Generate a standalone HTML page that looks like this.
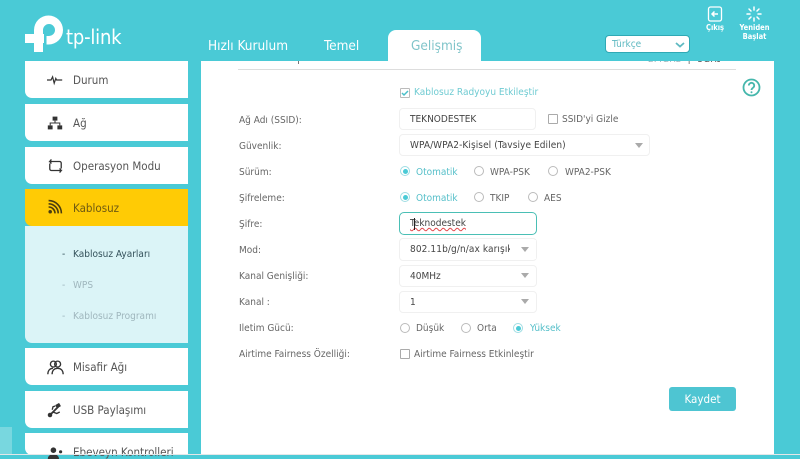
<!DOCTYPE html>
<html lang="tr">
<head>
<meta charset="utf-8">
<title>TP-Link</title>
<style>
html,body{margin:0;padding:0}
body{width:800px;height:455px;overflow:hidden;position:relative;background:#4acad6;font-family:"DejaVu Sans Condensed","DejaVu Sans","Liberation Sans",sans-serif;font-stretch:condensed;font-size:10px;color:#555}
.a{position:absolute;white-space:nowrap}
.nav{position:absolute;left:25px;width:163px;height:37px;background:#fff;border-radius:0 0 0 7px;box-sizing:border-box}
.nav span{position:absolute;left:48px;top:12px;font-size:11.500px;line-height:14px;color:#555;white-space:nowrap}
.nav svg{position:absolute;left:22px;top:11px}
.lb{position:absolute;left:239px;font-size:10px;color:#666;white-space:nowrap;line-height:12px}
.box{position:absolute;left:399px;width:138px;height:22px;border:1px solid #f0f0f0;border-radius:4px;background:#fff;box-sizing:border-box;font-size:10px;color:#444;line-height:22px;padding-left:10px;white-space:nowrap}
.tri{position:absolute;width:0;height:0;border-left:4px solid transparent;border-right:4px solid transparent;border-top:5px solid #aaa}
.r{position:absolute;width:10px;height:10px;border:1px solid #bbb;border-radius:50%;box-sizing:border-box;background:#fff}
.r.on{border-color:#9fdde3}
.r.on:after{content:"";position:absolute;left:1.500px;top:1.500px;width:5px;height:5px;border-radius:50%;background:#4acad6}
.t{position:absolute;font-size:10px;color:#666;white-space:nowrap;line-height:12px}
.t.c{color:#55bfc9}
.cb{position:absolute;width:8px;height:8px;border:1px solid #aaa;border-radius:1px;background:#fff}
</style>
</head>
<body>
<!-- logo -->
<svg class="a" style="left:25px;top:15px" width="38" height="38" viewBox="0 0 38 38" fill="#fff">
<path d="M9 15A14.500 14.500 0 1 1 23.500 29.500H21.500V21H23.500A6 6 0 1 0 18 15V37H9Z"/>
<rect x="0" y="19" width="19" height="9"/>
</svg>
<div class="a" style="left:66px;top:27px;font-size:20px;color:#fff;line-height:20px;letter-spacing:-.2px">tp-link</div>

<!-- tabs -->
<div class="a" style="left:208px;top:39px;font-size:13.500px;color:#fff;line-height:15px">Hızlı Kurulum</div>
<div class="a" style="left:324px;top:39px;font-size:13.500px;color:#fff;line-height:15px">Temel</div>

<!-- content -->
<div class="a" style="left:201px;top:61px;width:573px;height:394px;background:#fff"></div>
<div class="a" style="left:388px;top:30px;width:93px;height:32px;background:#fff;border-radius:8px 8px 0 0"></div>
<div class="a" style="left:411px;top:39px;font-size:13.500px;color:#7fc4c9;line-height:15px">Gelişmiş</div>
<div class="a" style="left:238px;top:69px;width:498px;height:1px;background:#ddd"></div>
<div class="a" style="left:648px;top:61px;width:72px;height:3px;overflow:hidden"><div style="position:absolute;left:0;top:-7px;font-size:10px;line-height:11px;color:#9fb6bd;white-space:nowrap">2.4GHz <span style="color:#555;margin-left:4px">|</span> <span style="color:#555;margin-left:4px">5GHz</span></div></div>
<div class="a" style="left:298px;top:61px;width:1px;height:3px;background:#777"></div>

<!-- top right -->
<svg class="a" style="left:707px;top:6px" width="16" height="16" viewBox="0 0 16 16" fill="none" stroke="#fff" stroke-width="1.300">
<rect x="1.500" y="1" width="13" height="14" rx="2"/>
<path d="M11 8H5M7.500 5.500 5 8l2.500 2.500" stroke-width="1.500"/>
</svg>
<div class="a" style="left:706px;top:23px;font-size:7.500px;font-weight:bold;color:#fff;line-height:9px">Çıkış</div>
<svg class="a" style="left:746px;top:6px" width="16" height="16" viewBox="0 0 16 16" stroke="#fff" stroke-width="1.500" stroke-linecap="round">
<path d="M8 1v3M8 12v3M1 8h3M12 8h3M3 3l2 2M11 11l2 2M3 13l2-2M11 5l2-2"/>
</svg>
<div class="a" style="left:738px;top:23px;width:33px;text-align:center;font-size:7.500px;font-weight:bold;color:#fff;line-height:9px">Yeniden<br>Başlat</div>
<div class="a" style="left:605px;top:35px;width:85px;height:18px;background:#fff;border:1px solid #2fa9b5;border-radius:4px;box-sizing:border-box"></div>
<div class="a" style="left:612px;top:39px;font-size:10px;color:#5fb9c1;line-height:12px">Türkçe</div>
<svg class="a" style="left:675px;top:42px" width="10" height="6" viewBox="0 0 10 6" fill="none" stroke="#5fb9c1" stroke-width="1.800"><path d="M1 1l4 3.500L9 1"/></svg>

<!-- sidebar -->
<div class="nav" style="top:61px"><svg width="16" height="16" viewBox="0 0 20 20" fill="none" stroke="#333" stroke-width="1.500"><path d="M0 10h5l2-4 2 8 2-6 1 2h7"/></svg><span>Durum</span></div>
<div class="nav" style="top:104px"><svg width="16" height="16" viewBox="0 0 20 20" fill="#333"><rect x="7" y="2" width="6" height="5"/><rect x="1" y="13" width="6" height="5"/><rect x="13" y="13" width="6" height="5"/><path d="M4 13v-3h12v3M10 7v3" fill="none" stroke="#333" stroke-width="1.300"/></svg><span>Ağ</span></div>
<div class="nav" style="top:147px"><svg style="top:10px" width="17" height="18" viewBox="0 0 20 22" fill="none" stroke="#333" stroke-width="1.600"><path d="M5 3 3 5.500h12a2 2 0 0 1 2 2V14M5 8 3 5.500M15 19l2-2.500H5a2 2 0 0 1-2-2V8M15 14l2 2.500"/></svg><span>Operasyon Modu</span></div>
<div class="a" style="left:25px;top:226px;width:163px;height:117px;background:#dbf4f7;border-radius:0 0 0 7px"></div>
<div class="nav" style="top:189px;background:#ffcb05"><svg style="top:10px" width="16" height="16" viewBox="0 0 20 20" fill="none" stroke="#4a3c10" stroke-width="2"><circle cx="4" cy="16" r="2.200" fill="#4a3c10" stroke="none"/><path d="M2 10a8 8 0 0 1 8 8M2 6a12 12 0 0 1 12 12M2 2a16 16 0 0 1 16 16"/></svg><span style="color:#6f5a12">Kablosuz</span></div>
<div class="a" style="left:62px;top:249px;font-size:10px;color:#33505a;line-height:12px">-</div>
<div class="a" style="left:73px;top:249px;font-size:10px;color:#33505a;line-height:12px">Kablosuz Ayarları</div>
<div class="a" style="left:62px;top:280px;font-size:10px;color:#9fb6bd;line-height:12px">-</div>
<div class="a" style="left:73px;top:280px;font-size:10px;color:#9fb6bd;line-height:12px">WPS</div>
<div class="a" style="left:62px;top:311px;font-size:10px;color:#9fb6bd;line-height:12px">-</div>
<div class="a" style="left:73px;top:311px;font-size:10px;color:#9fb6bd;line-height:12px">Kablosuz Programı</div>
<div class="nav" style="top:348px"><svg width="17" height="17" viewBox="0 0 20 20" fill="none" stroke="#333" stroke-width="1.600"><circle cx="7.500" cy="6" r="3.500"/><circle cx="12.500" cy="6" r="3.500"/><path d="M1 18c0-4 2-7 6-7M19 18c0-4-2-7-6.500-7S6 14 6 18"/></svg><span>Misafir Ağı</span></div>
<div class="nav" style="top:391px"><svg style="top:12px" width="15" height="15" viewBox="0 0 20 20" fill="#333"><circle cx="4" cy="16" r="3"/><path d="M4 16 15 5" stroke="#333" stroke-width="2.500"/><rect x="12" y="1" width="6" height="5" transform="rotate(-30 15 4)"/><path d="M8 12l5 2 4-2M7 9l1-4 3-1" fill="none" stroke="#333" stroke-width="1.800"/></svg><span>USB Paylaşımı</span></div>
<div class="nav" style="top:433px;height:22px"><svg style="top:14px" width="16" height="12" viewBox="0 0 20 15" fill="#333"><circle cx="8" cy="4" r="3.500"/><path d="M1 15c0-4 3-6 7-6s7 2 7 6z"/><circle cx="17" cy="6" r="2"/></svg><span>Ebeveyn Kontrolleri</span></div>
<div class="a" style="left:0;top:427px;width:12px;height:28px;background:#78d7df"></div>

<!-- help -->
<svg class="a" style="left:742px;top:78px" width="19" height="19" viewBox="0 0 19 19" fill="none" stroke="#45b7ac" stroke-width="1.800">
<circle cx="9.500" cy="9.500" r="8"/>
<path d="M6.800 7.500a2.700 2.700 0 1 1 4.300 2.200c-1 .7-1.600 1.200-1.600 2.300"/>
<circle cx="9.500" cy="14.300" r="1" fill="#45b7ac" stroke="none"/>
</svg>

<!-- form -->
<div class="cb" style="left:400px;top:88px;border-color:#bbb"></div>
<svg class="a" style="left:400px;top:88px" width="10" height="10" viewBox="0 0 10 10" fill="none" stroke="#4abfc9" stroke-width="1.500"><path d="M2 5l2 2 4-4"/></svg>
<div class="t c" style="left:414px;top:87px;color:#6fcbd2">Kablosuz Radyoyu Etkileştir</div>

<div class="lb" style="top:115px">Ağ Adı (SSID):</div>
<div class="box" style="top:108px;width:137px">TEKNODESTEK</div>
<div class="cb" style="left:548px;top:114px"></div>
<div class="t" style="left:562px;top:114px">SSID'yi Gizle</div>

<div class="lb" style="top:141px">Güvenlik:</div>
<div class="box" style="top:134px;width:251px;letter-spacing:.08px">WPA/WPA2-Kişisel (Tavsiye Edilen)</div>
<div class="tri" style="left:635px;top:143px"></div>

<div class="lb" style="top:167px">Sürüm:</div>
<div class="r on" style="left:400px;top:166px"></div>
<div class="t c" style="left:416px;top:167px">Otomatik</div>
<div class="r" style="left:474px;top:166px"></div>
<div class="t" style="left:490px;top:167px">WPA-PSK</div>
<div class="r" style="left:548px;top:166px"></div>
<div class="t" style="left:565px;top:167px">WPA2-PSK</div>

<div class="lb" style="top:193px">Şifreleme:</div>
<div class="r on" style="left:400px;top:192px"></div>
<div class="t c" style="left:416px;top:193px">Otomatik</div>
<div class="r" style="left:474px;top:192px"></div>
<div class="t" style="left:490px;top:193px">TKIP</div>
<div class="r" style="left:528px;top:192px"></div>
<div class="t" style="left:544px;top:193px">AES</div>

<div class="lb" style="top:219px">Şifre:</div>
<div class="box" style="top:212px;border-color:#4abfb5;height:23px;line-height:22px;border-radius:5px"><span style="text-decoration:underline wavy #e2464a 1px;text-underline-offset:1px">Teknodestek</span></div>
<div class="a" style="left:414px;top:218px;width:1px;height:12px;background:#222"></div>

<div class="lb" style="top:245px">Mod:</div>
<div class="box" style="top:238px;height:23px;line-height:22px;letter-spacing:.1px">802.11b/g/n/ax karışık</div>
<div class="a" style="left:510px;top:240px;width:26px;height:19px;background:#fff"></div>
<div class="tri" style="left:521px;top:247px"></div>

<div class="lb" style="top:271px">Kanal Genişliği:</div>
<div class="box" style="top:265px">40MHz</div>
<div class="tri" style="left:521px;top:273px"></div>

<div class="lb" style="top:297px">Kanal :</div>
<div class="box" style="top:291px">1</div>
<div class="tri" style="left:521px;top:299px"></div>

<div class="lb" style="top:323px">Iletim Gücü:</div>
<div class="r" style="left:400px;top:323px"></div>
<div class="t" style="left:416px;top:323px">Düşük</div>
<div class="r" style="left:461px;top:323px"></div>
<div class="t" style="left:477px;top:323px">Orta</div>
<div class="r on" style="left:513px;top:323px"></div>
<div class="t c" style="left:530px;top:323px">Yüksek</div>

<div class="lb" style="top:349px">Airtime Fairness Özelliği:</div>
<div class="cb" style="left:400px;top:349px"></div>
<div class="t" style="left:414px;top:349px">Airtime Fairness Etkinleştir</div>

<div class="a" style="left:669px;top:387px;width:67px;height:24px;background:#4ec5d2;border-radius:3px;color:#fff;text-align:center;line-height:25px;font-size:11.500px">Kaydet</div>

<div class="a" style="left:0;top:454px;width:800px;height:1px;background:#e4e6e8"></div>
</body>
</html>
